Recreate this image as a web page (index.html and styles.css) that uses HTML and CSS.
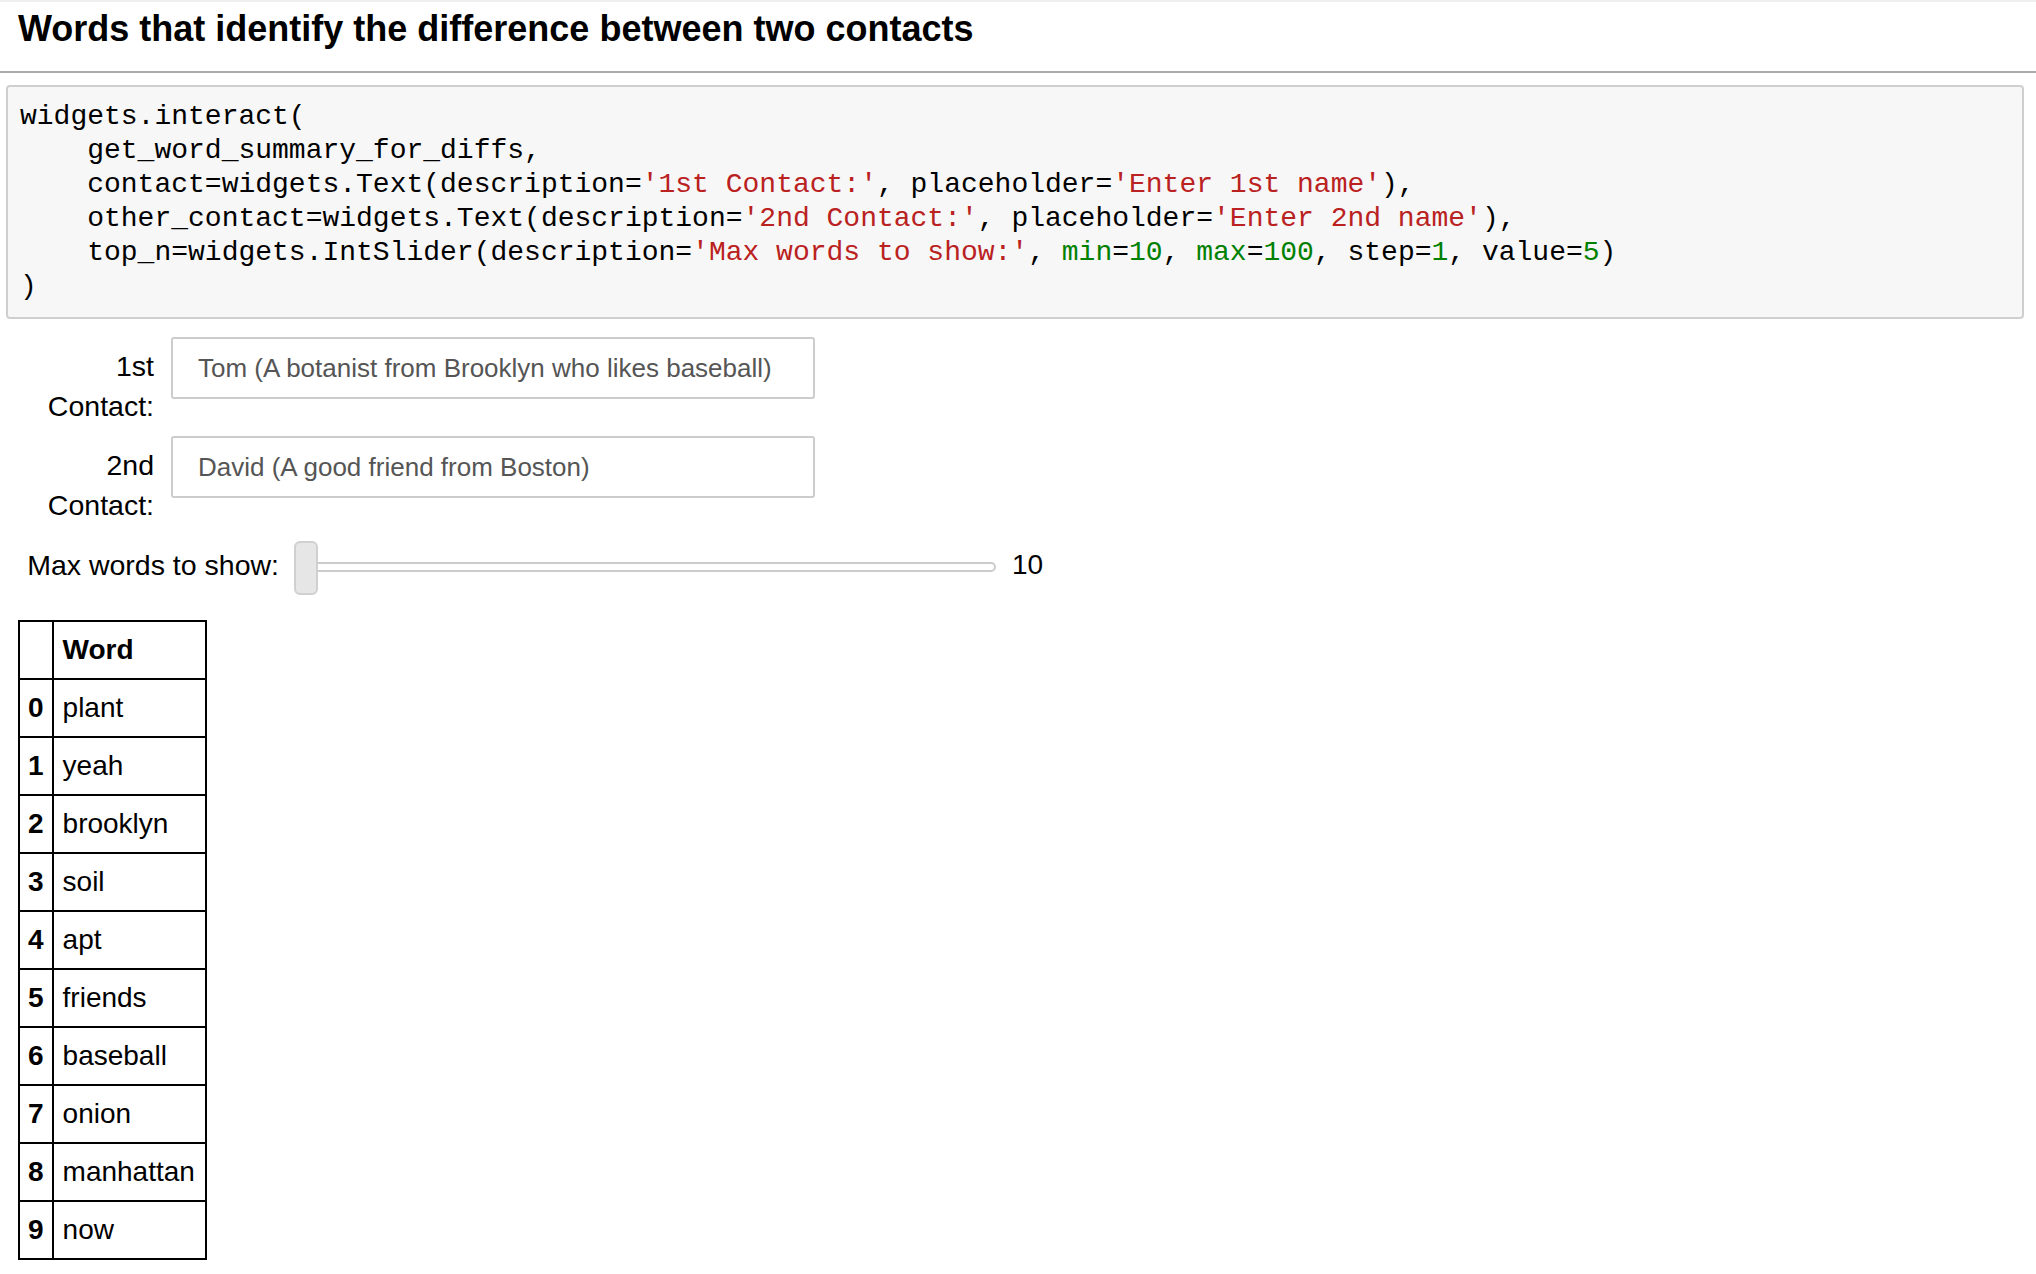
FILE: index.html
```html
<!DOCTYPE html>
<html lang="en">
<head>
<meta charset="utf-8">
<title>Words that identify the difference between two contacts</title>
<link rel="stylesheet" href="styles.css">
</head>
<body>
<div class="notebook">
  <h3 class="cell-title">Words that identify the difference between two contacts</h3>

  <div class="input-area">
<pre class="code"><span>widgets.interact(</span>
<span>    get_word_summary_for_diffs,</span>
<span>    contact=widgets.Text(description=<span class="s">'1st Contact:'</span>, placeholder=<span class="s">'Enter 1st name'</span>),</span>
<span>    other_contact=widgets.Text(description=<span class="s">'2nd Contact:'</span>, placeholder=<span class="s">'Enter 2nd name'</span>),</span>
<span>    top_n=widgets.IntSlider(description=<span class="s">'Max words to show:'</span>, <span class="b">min</span>=<span class="n">10</span>, <span class="b">max</span>=<span class="n">100</span>, step=<span class="n">1</span>, value=<span class="n">5</span>)</span>
<span>)</span></pre>
  </div>

  <div class="widgets">
    <div class="w-row">
      <label class="w-label">1st Contact:</label>
      <div class="w-text">Tom (A botanist from Brooklyn who likes baseball)</div>
    </div>
    <div class="w-row">
      <label class="w-label">2nd Contact:</label>
      <div class="w-text">David (A good friend from Boston)</div>
    </div>
    <div class="w-slider-row">
      <label class="w-slider-label">Max words to show:</label>
      <div class="slider">
        <div class="track"></div>
        <div class="handle"></div>
      </div>
      <div class="readout">10</div>
    </div>
  </div>

  <table class="df">
    <thead>
      <tr><th class="idx"></th><th class="val">Word</th></tr>
    </thead>
    <tbody>
      <tr><th class="idx">0</th><td>plant</td></tr>
      <tr><th class="idx">1</th><td>yeah</td></tr>
      <tr><th class="idx">2</th><td>brooklyn</td></tr>
      <tr><th class="idx">3</th><td>soil</td></tr>
      <tr><th class="idx">4</th><td>apt</td></tr>
      <tr><th class="idx">5</th><td>friends</td></tr>
      <tr><th class="idx">6</th><td>baseball</td></tr>
      <tr><th class="idx">7</th><td>onion</td></tr>
      <tr><th class="idx">8</th><td>manhattan</td></tr>
      <tr><th class="idx">9</th><td>now</td></tr>
    </tbody>
  </table>
</div>
</body>
</html>
```

FILE: styles.css
```css
html, body {
  margin: 0;
  padding: 0;
  background: #ffffff;
}

body {
  font-family: "Liberation Sans", Arial, sans-serif;
  color: #000000;
  border-top: 2px solid #f0f0f0;
}

.notebook {
  width: 2036px;
}

.cell-title {
  margin: 0;
  padding: 5px 0 20px 18px;
  font-size: 36px;
  line-height: 44px;
  font-weight: bold;
  border-bottom: 2px solid #ababab;
}

.input-area {
  margin: 12px 12px 0 6px;
  border: 2px solid #cfcfcf;
  border-radius: 4px;
  background: #f7f7f7;
  padding: 13px 12px 13px 12px;
}

.code {
  margin: 0;
  font-family: "Liberation Mono", "Courier New", monospace;
  font-size: 28px;
  line-height: 34px;
  color: #000000;
  white-space: pre;
}

.code .s { color: #ba2121; }
.code .n { color: #008000; }
.code .b { color: #008000; }

.widgets {
  margin-top: 18px;
}

.w-row {
  display: flex;
  align-items: flex-start;
  margin-bottom: 9px;
}

.w-label {
  width: 122px;
  margin-left: 32px;
  padding-top: 9px;
  padding-bottom: 1px;
  text-align: right;
  font-size: 28.5px;
  line-height: 40px;
  color: #000;
}

.w-text {
  box-sizing: border-box;
  width: 644px;
  height: 62px;
  margin-left: 17px;
  border: 2px solid #cccccc;
  border-radius: 3px;
  padding: 0 25px;
  font-size: 26px;
  line-height: 58px;
  color: #555555;
  white-space: nowrap;
  overflow: hidden;
}

.w-slider-row {
  display: flex;
  align-items: flex-start;
  padding-top: 6px;
}

.w-slider-label {
  width: 279px;
  margin-top: 4px;
  text-align: right;
  font-size: 28.5px;
  line-height: 40px;
  white-space: nowrap;
}

.slider {
  position: relative;
  width: 702px;
  height: 54px;
  margin-left: 15px;
}

.track {
  box-sizing: border-box;
  margin-left: 8px;
  margin-top: 21px;
  height: 10px;
  border: 2px solid #cccccc;
  border-radius: 5px;
  background: #ffffff;
}

.handle {
  position: absolute;
  left: 0;
  top: 0;
  box-sizing: border-box;
  width: 24px;
  height: 54px;
  border: 2px solid #d0d0d0;
  border-radius: 6px;
  background: #e6e6e6;
}

.readout {
  margin-left: 16px;
  margin-top: 4px;
  font-size: 28px;
  line-height: 40px;
}

.df {
  margin: 25px 0 0 18px;
  border-collapse: separate;
  border-spacing: 0;
  border-top: 2px solid #000;
  border-left: 2px solid #000;
  font-size: 28px;
}

.df th,
.df td {
  height: 56px;
  padding: 0 10px 0 9px;
  line-height: 56px;
  border-right: 2px solid #000;
  border-bottom: 2px solid #000;
  text-align: left;
  vertical-align: middle;
  white-space: nowrap;
}

.df th.idx {
  font-weight: bold;
  padding: 0 8px 0 8px;
}

.df th.val {
  font-weight: bold;
}

.df td {
  font-weight: normal;
}
```
